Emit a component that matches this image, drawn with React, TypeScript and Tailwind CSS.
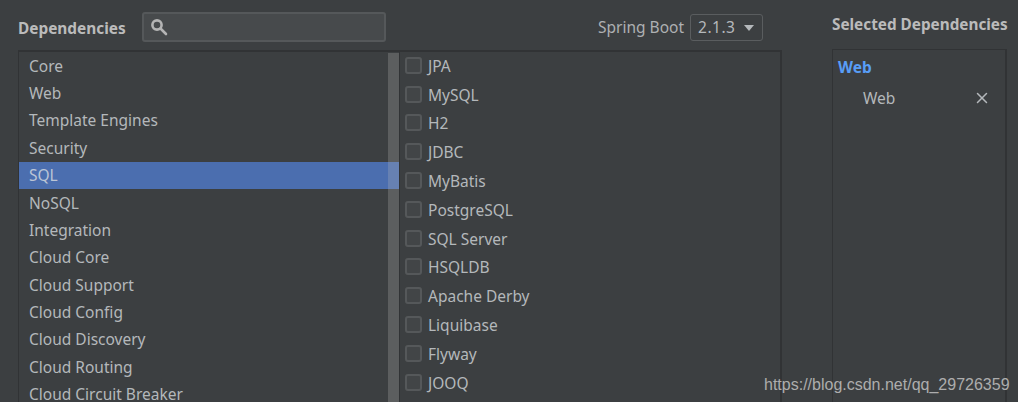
import { X } from 'lucide-react';

const categories = [
  'Core', 'Web', 'Template Engines', 'Security', 'SQL', 'NoSQL', 'Integration',
  'Cloud Core', 'Cloud Support', 'Cloud Config', 'Cloud Discovery', 'Cloud Routing', 'Cloud Circuit Breaker',
];

const sqlDeps = [
  'JPA', 'MySQL', 'H2', 'JDBC', 'MyBatis', 'PostgreSQL', 'SQL Server', 'HSQLDB',
  'Apache Derby', 'Liquibase', 'Flyway', 'JOOQ',
];

export default function App() {
  return (
    <div className="relative flex h-[402px] w-[1018px] overflow-hidden bg-[#3c3f41] font-['Noto_Sans',sans-serif] text-[15.5px] text-[#b4b8bb]">
      {/* Picker side */}
      <div className="ml-[18px] flex w-[764px] flex-col">
        <div className="flex h-[50px] shrink-0 items-center pt-[4px]">
          <span className="mt-[3px] w-[124px] text-[15.4px] font-bold text-[#bbbbbb]">Dependencies</span>
          <div className="flex h-[30px] w-[244px] items-center rounded-[3px] border-2 border-[#55585a] bg-[#474a4c] pl-[6px]">
            <svg width="18" height="18" viewBox="0 0 18 18" fill="none" stroke="#b4b4b4" strokeWidth="2.6">
              <circle cx="7" cy="7" r="4.6" />
              <path d="M10.5 10.5 16 16" strokeLinecap="round" />
            </svg>
          </div>
          <span className="ml-[212px] mt-[2px] text-[#aeb0b2]">Spring Boot</span>
          <div className="ml-[6px] flex h-[27px] w-[73px] items-center rounded-[3px] border border-[#5a5d5f] pl-[7px] pt-[1px] tracking-[0.5px] text-[#b4b8bb]">
            2.1.3
            <span className="ml-[9px] h-0 w-0 border-x-[5px] border-t-[6px] border-x-transparent border-t-[#b4b8bb]" />
          </div>
        </div>
        <div className="flex min-h-0 flex-1 border-l border-t-2 border-r-2 border-[#313335]">
          {/* Category list with scrollbar */}
          <div className="relative w-[380px] shrink-0">
            {categories.map((name) => (
              <div
                key={name}
                className={`flex h-[27.4px] items-center whitespace-nowrap pl-[10px] pt-[1px] ${name === 'SQL' ? 'bg-[#4b6eaf] text-[#bbc5d6]' : ''}`}
              >
                {name}
              </div>
            ))}
            <div className="absolute bottom-0 right-0 top-[1px] w-[11px] bg-[#bbbbbb]/25" />
          </div>
          {/* Dependencies of the chosen category */}
          <div className="-mt-[1px] flex-1 border-l border-[#313335] pl-[5px]">
            {sqlDeps.map((name) => (
              <label key={name} className="flex h-[28.8px] items-center">
                <span className="h-[17px] w-[17px] rounded-[3px] border-2 border-[#55585a] bg-[#424547]" />
                <span className="ml-[6px] pt-[2px]">{name}</span>
              </label>
            ))}
          </div>
        </div>
      </div>

      {/* Selected side */}
      <div className="ml-[50px] flex w-[175px] flex-col">
        <div className="flex h-[49px] shrink-0 items-start pt-[14px] text-[15.3px] font-bold leading-[20px] text-[#bbbbbb]">
          <span className="whitespace-nowrap">Selected Dependencies</span>
        </div>
        <div className="flex-1 border-l border-t border-r-2 border-[#313335] pl-[5px] pt-[6px]">
          <div className="text-[15.5px] font-bold leading-[22px] text-[#589df6]">Web</div>
          <div className="mt-[9px] flex items-center justify-between pl-[25px] pr-[14px] leading-[22px]">
            <span>Web</span>
            <X size={18} strokeWidth={2} className="text-[#b4b8bb]" />
          </div>
        </div>
      </div>

      <span className="absolute left-[764px] top-[373px] font-['Liberation_Sans',sans-serif] text-[16px] text-[#adadad]">
        https://blog.csdn.net/qq_29726359
      </span>
    </div>
  );
}
